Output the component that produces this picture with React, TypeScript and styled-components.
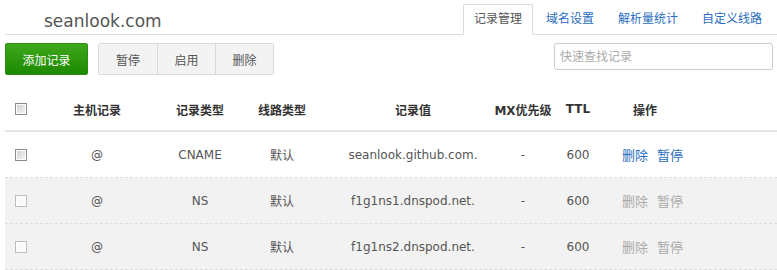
import React from 'react';
import styled, { createGlobalStyle } from 'styled-components';

interface DnsRecord {
  host: string;
  type: string;
  line: string;
  value: string;
  mx: string;
  ttl: number;
  paused?: boolean;
}

const records: DnsRecord[] = [
  { host: '@', type: 'CNAME', line: '默认', value: 'seanlook.github.com.', mx: '-', ttl: 600 },
  { host: '@', type: 'NS', line: '默认', value: 'f1g1ns1.dnspod.net.', mx: '-', ttl: 600, paused: true },
  { host: '@', type: 'NS', line: '默认', value: 'f1g1ns2.dnspod.net.', mx: '-', ttl: 600, paused: true },
];

const tabs = ['记录管理', '域名设置', '解析量统计', '自定义线路'];

const GlobalStyle = createGlobalStyle`
  html, body {
    margin: 0;
    padding: 0;
    background: #fff;
  }
  body {
    font-family: "DejaVu Sans", "Noto Sans CJK SC", sans-serif;
    font-size: 12px;
    color: #555;
  }
`;

const Page = styled.div`
  width: 777px;
  height: 270px;
  overflow: hidden;
  padding-left: 5px;
  box-sizing: border-box;
`;

const Header = styled.div`
  display: flex;
  justify-content: space-between;
  align-items: flex-end;
  height: 34px;
  border-bottom: 1px solid #ddd;
`;

const Title = styled.h1`
  align-self: flex-start;
  margin: 0;
  padding: 8px 0 0 39px;
  font-size: 17px;
  font-weight: normal;
  line-height: 26px;
  color: #555;
`;

const Tabs = styled.ul`
  display: flex;
  gap: 2px;
  margin: 0 4px -1px 0;
  padding: 0;
  list-style: none;
`;

const Tab = styled.li<{ $active?: boolean }>`
  height: 29px;
  line-height: 29px;
  padding: 0 10px;
  border: 1px solid ${(p) => (p.$active ? '#ddd' : 'transparent')};
  border-bottom-color: ${(p) => (p.$active ? '#fff' : 'transparent')};
  background: ${(p) => (p.$active ? '#fff' : 'transparent')};
  color: ${(p) => (p.$active ? '#555' : '#2a6dbd')};
  cursor: pointer;
`;

const Toolbar = styled.div`
  display: flex;
  align-items: flex-start;
  margin-top: 8px;
  padding-right: 4px;
`;

const PrimaryButton = styled.button`
  width: 83px;
  height: 32px;
  border: 1px solid #2b8d12;
  border-radius: 2px;
  background: linear-gradient(#3ea81c, #1c8900);
  color: #fff;
  font: inherit;
  cursor: pointer;
`;

const ButtonGroup = styled.div`
  display: flex;
  margin-left: 10px;
  border: 1px solid #d9d9d9;
  border-radius: 2px;
  overflow: hidden;
`;

const GroupButton = styled.button`
  width: 58px;
  height: 30px;
  border: 0;
  border-left: 1px solid #d9d9d9;
  background: #f3f3f3;
  color: #555;
  font: inherit;
  cursor: pointer;
  &:first-child {
    border-left: 0;
  }
`;

const Search = styled.input`
  margin-left: auto;
  width: 219px;
  height: 27px;
  box-sizing: border-box;
  padding: 0 5px;
  border: 1px solid #ccc;
  border-radius: 3px;
  font: inherit;
  color: #555;
  outline: none;
  &::placeholder {
    color: #aaa;
  }
`;

const Table = styled.div`
  margin-top: 13px;
`;

const columns = '32px 120px 86px 78px 184px 36px 74px 60px 1fr';

const HeadRow = styled.div`
  display: grid;
  grid-template-columns: ${columns};
  align-items: center;
  height: 42px;
  border-bottom: 2px solid #e6e6e6;
  font-weight: bold;
  color: #333;
`;

const Row = styled.div<{ $muted?: boolean }>`
  display: grid;
  grid-template-columns: ${columns};
  align-items: center;
  height: 45px;
  border-bottom: 1px dashed #ddd;
  background: ${(p) => (p.$muted ? '#f2f2f2' : '#fff')};
`;

const Cell = styled.div`
  display: flex;
  justify-content: center;
  white-space: nowrap;
`;

const ActionCell = styled.div`
  display: flex;
  gap: 9px;
  padding-left: 7px;
  white-space: nowrap;
`;

const ActionLink = styled.a<{ $disabled?: boolean }>`
  font-size: 13px;
  color: ${(p) => (p.$disabled ? '#aaa' : '#2a6dbd')};
  text-decoration: none;
  cursor: pointer;
`;

const Check = styled.span<{ $light?: boolean }>`
  display: block;
  width: 12px;
  height: 12px;
  box-sizing: border-box;
  border: 1px solid ${(p) => (p.$light ? '#bdbdbd' : '#8a8a8a')};
  background: ${(p) => (p.$light ? '#f9f9f9' : 'linear-gradient(135deg, #cfcfcf, #f6f6f6)')};
  box-shadow: inset 0 0 0 1px #fff;
`;

export default function App() {
  return (
    <>
      <GlobalStyle />
      <Page>
        <Header>
          <Title>seanlook.com</Title>
          <Tabs>
            {tabs.map((t, i) => (
              <Tab key={t} $active={i === 0}>
                {t}
              </Tab>
            ))}
          </Tabs>
        </Header>

        <Toolbar>
          <PrimaryButton>添加记录</PrimaryButton>
          <ButtonGroup>
            <GroupButton>暂停</GroupButton>
            <GroupButton>启用</GroupButton>
            <GroupButton>删除</GroupButton>
          </ButtonGroup>
          <Search placeholder="快速查找记录" />
        </Toolbar>

        <Table>
          <HeadRow>
            <Cell>
              <Check role="checkbox" aria-checked="false" />
            </Cell>
            <Cell>主机记录</Cell>
            <Cell>记录类型</Cell>
            <Cell>线路类型</Cell>
            <Cell>记录值</Cell>
            <Cell>MX优先级</Cell>
            <Cell>TTL</Cell>
            <Cell>操作</Cell>
          </HeadRow>
          {records.map((r) => (
            <Row key={r.value} $muted={r.paused}>
              <Cell>
                <Check role="checkbox" aria-checked="false" $light={r.paused} />
              </Cell>
              <Cell>{r.host}</Cell>
              <Cell>{r.type}</Cell>
              <Cell>{r.line}</Cell>
              <Cell>{r.value}</Cell>
              <Cell>{r.mx}</Cell>
              <Cell>{r.ttl}</Cell>
              <ActionCell>
                <ActionLink $disabled={r.paused}>删除</ActionLink>
                <ActionLink $disabled={r.paused}>暂停</ActionLink>
              </ActionCell>
            </Row>
          ))}
        </Table>
      </Page>
    </>
  );
}
